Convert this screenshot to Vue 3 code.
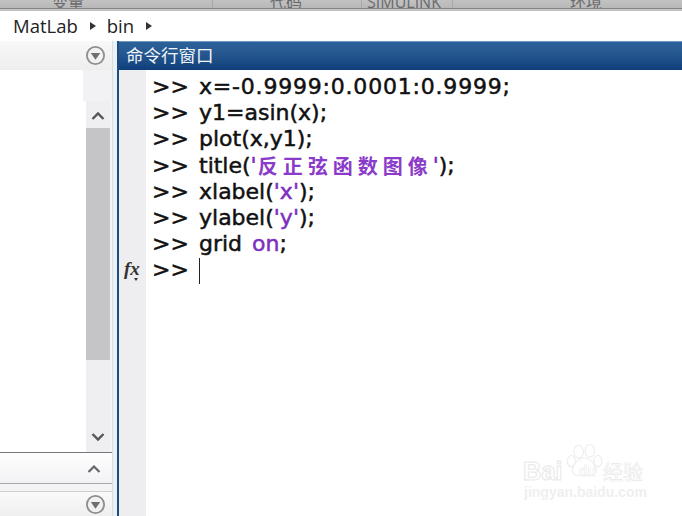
<script setup>
const tabs = [
  { label: '变量', width: 213, pad: 52 },
  { label: '代码', width: 149, pad: 57 },
  { label: 'SIMULINK', width: 91, pad: 5 },
  { label: '环境', width: 229, pad: 117 }
]
const lines = [
  [{ t: 'x=-0.9999:0.0001:0.9999;', c: 'wide' }],
  [{ t: 'y1=asin(x);' }],
  [{ t: 'plot(x,y1);' }],
  [{ t: 'title(' }, { t: "'", c: 'str' }, { t: '反正弦函数图像', c: 'cjk' }, { t: "'", c: 'str' }, { t: ');' }],
  [{ t: 'xlabel(' }, { t: "'x'", c: 'str' }, { t: ');' }],
  [{ t: 'ylabel(' }, { t: "'y'", c: 'str' }, { t: ');' }],
  [{ t: 'grid ' }, { t: 'on', c: 'str' }, { t: ';' }]
]
</script>

<template>
  <div class="page">
    <div class="tabs">
      <div v-for="tab in tabs" :key="tab.label" class="tab" :style="{ width: tab.width + 'px', paddingLeft: tab.pad + 'px' }">{{ tab.label }}</div>
    </div>
    <div class="crumbs">
      <span>MatLab</span><i class="tri"></i><span>bin</span><i class="tri"></i>
    </div>
    <div class="main">
      <aside class="side">
        <div class="side-head">
          <svg class="round" viewBox="0 0 20 20"><circle cx="10" cy="10" r="8.2" fill="#f1f1f1" stroke="#8e8e8e" stroke-width="1.7"/><path d="M5.5 7.5h9L10 14z" fill="#6f6f6f"/></svg>
        </div>
        <div class="side-top"><div class="blank"></div></div>
        <div class="list">
          <div class="list-body"></div>
          <div class="scroll">
            <div class="sbtn"><svg viewBox="0 0 14 10" class="chev"><path d="M1.5 8 7 2.5 12.5 8" fill="none" stroke="#55555a" stroke-width="2.4"/></svg></div>
            <div class="thumb"></div>
            <div class="track"></div>
            <div class="sbtn low"><svg viewBox="0 0 14 10" class="chev"><path d="M1.5 2 7 7.5 12.5 2" fill="none" stroke="#55555a" stroke-width="2.4"/></svg></div>
          </div>
        </div>
        <div class="fold">
          <svg viewBox="0 0 14 10" class="chev small"><path d="M1.5 8 7 2.5 12.5 8" fill="none" stroke="#66666a" stroke-width="2.2"/></svg>
        </div>
        <div class="side-foot">
          <svg class="round" viewBox="0 0 20 20"><circle cx="10" cy="10" r="8.2" fill="#f1f1f1" stroke="#8e8e8e" stroke-width="1.7"/><path d="M5.5 7.5h9L10 14z" fill="#6f6f6f"/></svg>
        </div>
      </aside>
      <div class="split"></div>
      <section class="cmd">
        <header class="cmd-head">命令行窗口</header>
        <div class="cmd-body">
          <div class="gutter"><span class="fx">fx</span><i class="fx-tri"></i></div>
          <div class="code">
            <div v-for="(line, i) in lines" :key="i" class="line">
              <span class="prompt">&gt;&gt;</span><span v-for="(part, j) in line" :key="j" :class="part.c">{{ part.t }}</span>
            </div>
            <div class="line"><span class="prompt">&gt;&gt;</span><i class="caret"></i></div>
          </div>
        </div>
      </section>
    </div>
    <div class="mark">
      <svg class="paw" viewBox="0 0 50 50">
        <g fill="#fff" stroke="#ececec" stroke-width="1.3">
          <ellipse cx="17" cy="12" rx="6" ry="8"/><ellipse cx="31" cy="11" rx="6" ry="8"/>
          <ellipse cx="8" cy="24" rx="5" ry="7"/><ellipse cx="41" cy="24" rx="5" ry="7"/>
          <path d="M24 20c7 0 14 8 15 15 0 6-6 8-15 7-9 1-15-1-15-7 1-7 8-15 15-15z"/>
        </g>
      </svg>
      <div class="mark-row"><span class="mark-bai">Bai</span><span class="mark-du">du</span><span class="mark-cn">经验</span></div>
      <div class="mark-url">jingyan.baidu.com</div>
    </div>
  </div>
</template>

<style scoped>
.page {
  position: relative;
  width: 682px;
  height: 516px;
  overflow: hidden;
  background: #fff;
  font-family: "Open Sans", "Noto Sans CJK SC", sans-serif;
  display: flex;
  flex-direction: column;
}
.tabs {
  display: flex;
  height: 9px;
  flex: none;
  background: #bcbcbc;
  border-bottom: 1px solid #858585;
  box-sizing: border-box;
  overflow: hidden;
}
.tab {
  box-sizing: border-box;
  height: 8px;
  font-size: 16px;
  line-height: 12px;
  color: #6a6a6e;
  border-right: 1px solid #a8a8a8;
  overflow: hidden;
  display: flex;
  align-items: flex-end;
  background: linear-gradient(#c2c2c2, #b8b8b8);
}
.tab:last-child { border-right: 0; }
.crumbs {
  flex: none;
  height: 32px;
  box-sizing: border-box;
  border-top: 2px solid #c4c4c4;
  display: flex;
  align-items: center;
  padding: 0 0 1px 13px;
  font-size: 18.5px;
  color: #222;
  background: #fff;
}
.tri {
  width: 0;
  height: 0;
  border-left: 6px solid #333;
  border-top: 4.5px solid transparent;
  border-bottom: 4.5px solid transparent;
  margin: 0 11px 0 12px;
}
.main {
  flex: 1;
  display: flex;
  min-height: 0;
}
.side {
  width: 112px;
  flex: none;
  display: flex;
  flex-direction: column;
  background: #f4f3f5;
  border-right: 1px solid #dcdcdc;
}
.side-head {
  height: 29px;
  flex: none;
  display: flex;
  align-items: center;
  justify-content: flex-end;
  padding-right: 6px;
  background: linear-gradient(#f8f8f8, #eeeeef);
}
.round { width: 21px; height: 21px; display: block; }
.side-top {
  height: 31px;
  flex: none;
  background: #f2f1f3;
}
.blank { width: 83px; height: 31px; background: #fff; }
.list {
  height: 351px;
  flex: none;
  display: flex;
  border-bottom: 1px solid #77777b;
}
.list-body { width: 86px; flex: none; background: #fff; }
.scroll {
  width: 24px;
  flex: none;
  display: flex;
  flex-direction: column;
  background: #efeef0;
}
.sbtn {
  height: 27px;
  flex: none;
  display: flex;
  align-items: center;
  justify-content: center;
  padding-top: 2px;
  box-sizing: border-box;
}
.sbtn.low { height: 30px; padding-top: 0; padding-bottom: 1px; }
.chev { width: 14px; height: 10px; display: block; }
.thumb { height: 232px; flex: none; background: #c5c4c6; }
.track { flex: 1; background: #efeef0; }
.fold {
  height: 31px;
  flex: none;
  display: flex;
  align-items: center;
  justify-content: flex-end;
  padding: 2px 11px 0 0;
  box-sizing: border-box;
  background: linear-gradient(#fdfdfe, #f3f2f4);
  border-bottom: 1px solid #a9a9a9;
}
.side-foot {
  margin-top: 7px;
  flex: 1;
  display: flex;
  align-items: flex-start;
  justify-content: flex-end;
  padding: 2px 6px 0 0;
  background: linear-gradient(#fafafa, #efefef);
  border-top: 1px solid #cfcfcf;
}
.split {
  width: 4px;
  flex: none;
  background: #e9f2f8;
}
.cmd {
  flex: 1;
  min-width: 0;
  display: flex;
  flex-direction: column;
  border-left: 2px solid #1f4c7f;
}
.cmd-head {
  height: 29px;
  flex: none;
  box-sizing: border-box;
  padding-left: 7px;
  font-size: 17.5px;
  line-height: 27px;
  color: #f1f5fa;
  background: linear-gradient(#2c6098 0, #285a92 35%, #0f3f7b 100%);
  border-top: 1px solid #6f98bf;
}
.cmd-body {
  flex: 1;
  display: flex;
  min-height: 0;
}
.gutter {
  width: 27px;
  flex: none;
  position: relative;
  background: #eeeef1;
}
.fx {
  position: absolute;
  left: 5px;
  top: 187px;
  font-family: "Liberation Serif", serif;
  font-style: italic;
  font-weight: 700;
  font-size: 19px;
  line-height: 24px;
  color: #333;
}
.fx-tri {
  position: absolute;
  left: 15px;
  top: 208px;
  border-top: 3px solid #333;
  border-left: 2.5px solid transparent;
  border-right: 2.5px solid transparent;
}
.code {
  flex: 1;
  padding: 4px 0 0 6px;
  font-family: "DejaVu Sans", sans-serif;
  font-size: 22px;
  color: #111;
  -webkit-text-stroke: 0.5px #111;
  word-spacing: 3px;
  white-space: nowrap;
}
.line {
  height: 26.2px;
  line-height: 26.2px;
  display: flex;
  align-items: center;
}
.prompt {
  width: 47px;
  flex: none;
}
.line > span { white-space: pre; }
.line > .wide { letter-spacing: 0.8px; }
.line > .str { color: #7d2fc0; -webkit-text-stroke: 0.5px #7d2fc0; }
.line > .cjk {
  color: #8a3bc9;
  -webkit-text-stroke: 0;
  font-size: 20px;
  font-weight: 700;
  font-family: "Noto Sans CJK SC", sans-serif;
  letter-spacing: 5px;
  padding-left: 1px;
}
.caret {
  width: 1px;
  height: 26px;
  background: #222;
  margin-top: 2px;
}
.mark {
  position: absolute;
  left: 523px;
  top: 441px;
  width: 130px;
  height: 60px;
}
.paw {
  position: absolute;
  left: 42px;
  top: 0;
  width: 40px;
  height: 42px;
}
.mark-row {
  position: absolute;
  left: 0;
  top: 14px;
  display: flex;
  align-items: center;
  height: 32px;
  color: #fff;
  -webkit-text-stroke: 1px #e8e8e8;
  font-family: "Liberation Sans", sans-serif;
}
.mark-bai {
  width: 49px;
  font-size: 25.5px;
  font-weight: 700;
}
.mark-du {
  width: 31px;
  padding-left: 7px;
  box-sizing: border-box;
  font-size: 14px;
  font-weight: 700;
  -webkit-text-stroke: 0.5px #e8e8e8;
}
.mark-cn {
  font-size: 20px;
  font-family: "Noto Sans CJK SC", sans-serif;
  -webkit-text-stroke: 0.6px #e8e8e8;
}
.mark-url {
  position: absolute;
  left: 1px;
  top: 43px;
  font-size: 14px;
  font-weight: 700;
  color: #efefef;
  font-family: "Liberation Sans", sans-serif;
}
</style>
